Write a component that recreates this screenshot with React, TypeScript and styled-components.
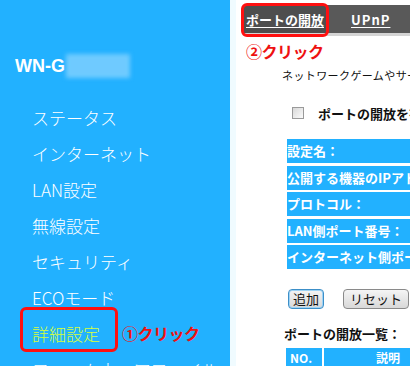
import React from 'react';
import styled, { createGlobalStyle } from 'styled-components';

const GlobalStyle = createGlobalStyle`
  html, body {
    margin: 0;
    padding: 0;
    background: #fff;
  }
  body {
    font-family: "Noto Sans CJK JP", "DejaVu Sans", sans-serif;
  }
`;

const BLUE = '#22b1ff';
const RED = '#ee1111';

const Page = styled.div`
  display: flex;
  width: 410px;
  height: 366px;
  overflow: hidden;
`;

const Sidebar = styled.div`
  flex: 0 0 230px;
  background: ${BLUE};
  padding-top: 54px;
  box-sizing: border-box;
`;

const Brand = styled.div`
  display: flex;
  align-items: center;
  height: 24px;
  padding-left: 15px;
`;

const BrandText = styled.span`
  font-family: "Liberation Sans", Arial, sans-serif;
  font-weight: bold;
  font-size: 18px;
  color: #fff;
`;

const Blurred = styled.div`
  width: 64px;
  height: 24px;
  margin-left: 1px;
  background: rgba(120, 205, 255, 0.9);
  filter: blur(2px);
`;

const Menu = styled.div`
  display: flex;
  flex-direction: column;
  margin-top: 21px;
`;

const MenuItem = styled.div<{ $active?: boolean }>`
  position: relative;
  display: flex;
  align-items: center;
  height: 36px;
  padding-left: 32px;
  font-size: 17px;
  font-weight: 300;
  color: ${(p) => (p.$active ? '#d6ff3a' : '#fff')};
  white-space: nowrap;

  ${(p) =>
    p.$active &&
    `
    &::after {
      content: '';
      position: absolute;
      left: 20px;
      top: -8px;
      width: 98px;
      height: 45px;
      box-sizing: border-box;
      border: 3px solid #ff1010;
      border-radius: 6px;
    }
  `}
`;

const Note = styled.span`
  color: ${RED};
  font-weight: bold;
  font-size: 16px;
  margin-left: 22px;
  letter-spacing: -0.5px;
`;

const Main = styled.div`
  flex: 1;
  min-width: 0;
  border-left: 6px solid #f0fbff;
  padding: 5px 0 0 7px;
  box-sizing: border-box;
  overflow: hidden;
`;

const TabBar = styled.div`
  display: flex;
  align-items: center;
  height: 28px;
  background: #595959;
  box-shadow: 0 3px 0 #d4d4d4;
  white-space: nowrap;
`;

const Tab = styled.div<{ $active?: boolean }>`
  position: relative;
  display: flex;
  align-items: center;
  height: 100%;
  padding: 0 ${(p) => (p.$active ? '3px' : '24px')};
  font-size: 13px;
  font-weight: bold;
  letter-spacing: ${(p) => (p.$active ? '0' : '1px')};
  color: #fff;
  text-decoration: underline;
  text-underline-offset: 2px;
  background: ${(p) => (p.$active ? '#4e4e4e' : 'transparent')};

  ${(p) =>
    p.$active &&
    `
    &::after {
      content: '';
      position: absolute;
      left: -2px;
      top: -2px;
      right: -2px;
      bottom: -4px;
      border: 3px solid #ff1010;
      border-radius: 6px;
    }
  `}
`;

const TabDivider = styled.div`
  width: 1px;
  height: 20px;
  background: #9a9a9a;
`;

const ClickNote = styled.div`
  color: ${RED};
  font-weight: bold;
  font-size: 16px;
  margin: 8px 0 0 3px;
  height: 20px;
  line-height: 20px;
  letter-spacing: -0.5px;
`;

const Desc = styled.div`
  font-size: 11px;
  letter-spacing: 0.4px;
  color: #111;
  margin: 6px 0 0 39px;
  white-space: nowrap;
`;

const CheckRow = styled.div`
  display: flex;
  align-items: center;
  margin: 23px 0 0 49px;
  height: 14px;
  white-space: nowrap;
`;

const Check = styled.span`
  flex: 0 0 auto;
  width: 10px;
  height: 10px;
  border: 1px solid #9a9a9a;
  background: linear-gradient(135deg, #d8d8d8, #fbfbfb);
  margin-right: 14px;
`;

const BoldText = styled.span`
  font-size: 13px;
  font-weight: bold;
  color: #111;
`;

const Form = styled.div`
  display: flex;
  flex-direction: column;
  gap: 2.6px;
  margin: 19px 0 0 44px;
`;

const FormRow = styled.div`
  height: 24px;
  line-height: 24px;
  background: ${BLUE};
  color: #fff;
  font-size: 13px;
  font-weight: bold;
  white-space: nowrap;
  overflow: hidden;
`;

const Buttons = styled.div`
  display: flex;
  gap: 19px;
  margin: 20px 0 0 45px;
`;

const Button = styled.button<{ $focused?: boolean }>`
  flex: 0 0 auto;
  height: 20px;
  padding: 0 ${(p) => (p.$focused ? '4px' : '6px')};
  font-family: "Noto Sans CJK JP", sans-serif;
  font-size: 13px;
  line-height: 16px;
  white-space: nowrap;
  color: #111;
  border-radius: 4px;
  border: 1px solid ${(p) => (p.$focused ? '#3c8fc8' : '#8a8a8a')};
  box-shadow: ${(p) => (p.$focused ? 'inset 0 0 0 1px #9fd3f5' : 'none')};
  background: linear-gradient(#f5f5f5, #d8d8d8);
`;

const ListTitle = styled.div`
  margin: 15px 0 0 41px;
  font-size: 13px;
  font-weight: bold;
  color: #111;
  white-space: nowrap;
`;

const TableHead = styled.div`
  display: flex;
  gap: 2px;
  margin: 5px 0 0 43px;
  height: 20px;
`;

const HeadCell = styled.div<{ $w?: number }>`
  ${(p) => (p.$w ? `flex: 0 0 ${p.$w}px;` : 'flex: 1;')}
  background: ${BLUE};
  color: #fff;
  font-size: 12px;
  font-weight: bold;
  line-height: 20px;
  text-align: ${(p) => (p.$w ? 'left' : 'right')};
  padding: 0 10px 0 4px;
  box-sizing: border-box;
`;

const menu = ['ステータス', 'インターネット', 'LAN設定', '無線設定', 'セキュリティ', 'ECOモード'];

const formRows = [
  '設定名：',
  '公開する機器のIPアドレス',
  'プロトコル：',
  'LAN側ポート番号：',
  'インターネット側ポート番号：',
];

export default function App() {
  return (
    <>
      <GlobalStyle />
      <Page>
        <Sidebar>
          <Brand>
            <BrandText>WN-G</BrandText>
            <Blurred />
          </Brand>
          <Menu>
            {menu.map((m) => (
              <MenuItem key={m}>{m}</MenuItem>
            ))}
            <MenuItem $active>
              詳細設定
              <Note>①クリック</Note>
            </MenuItem>
            <MenuItem>ファームウェアファイル</MenuItem>
          </Menu>
        </Sidebar>
        <Main>
          <TabBar>
            <Tab $active>ポートの開放</Tab>
            <Tab>UPnP</Tab>
            <TabDivider />
          </TabBar>
          <ClickNote>②クリック</ClickNote>
          <Desc>ネットワークゲームやサーバー公開のために</Desc>
          <CheckRow>
            <Check />
            <BoldText>ポートの開放を有効にする</BoldText>
          </CheckRow>
          <Form>
            {formRows.map((r) => (
              <FormRow key={r}>{r}</FormRow>
            ))}
          </Form>
          <Buttons>
            <Button $focused>追加</Button>
            <Button>リセット</Button>
          </Buttons>
          <ListTitle>ポートの開放一覧：</ListTitle>
          <TableHead>
            <HeadCell $w={28}>NO.</HeadCell>
            <HeadCell>説明</HeadCell>
          </TableHead>
        </Main>
      </Page>
    </>
  );
}
